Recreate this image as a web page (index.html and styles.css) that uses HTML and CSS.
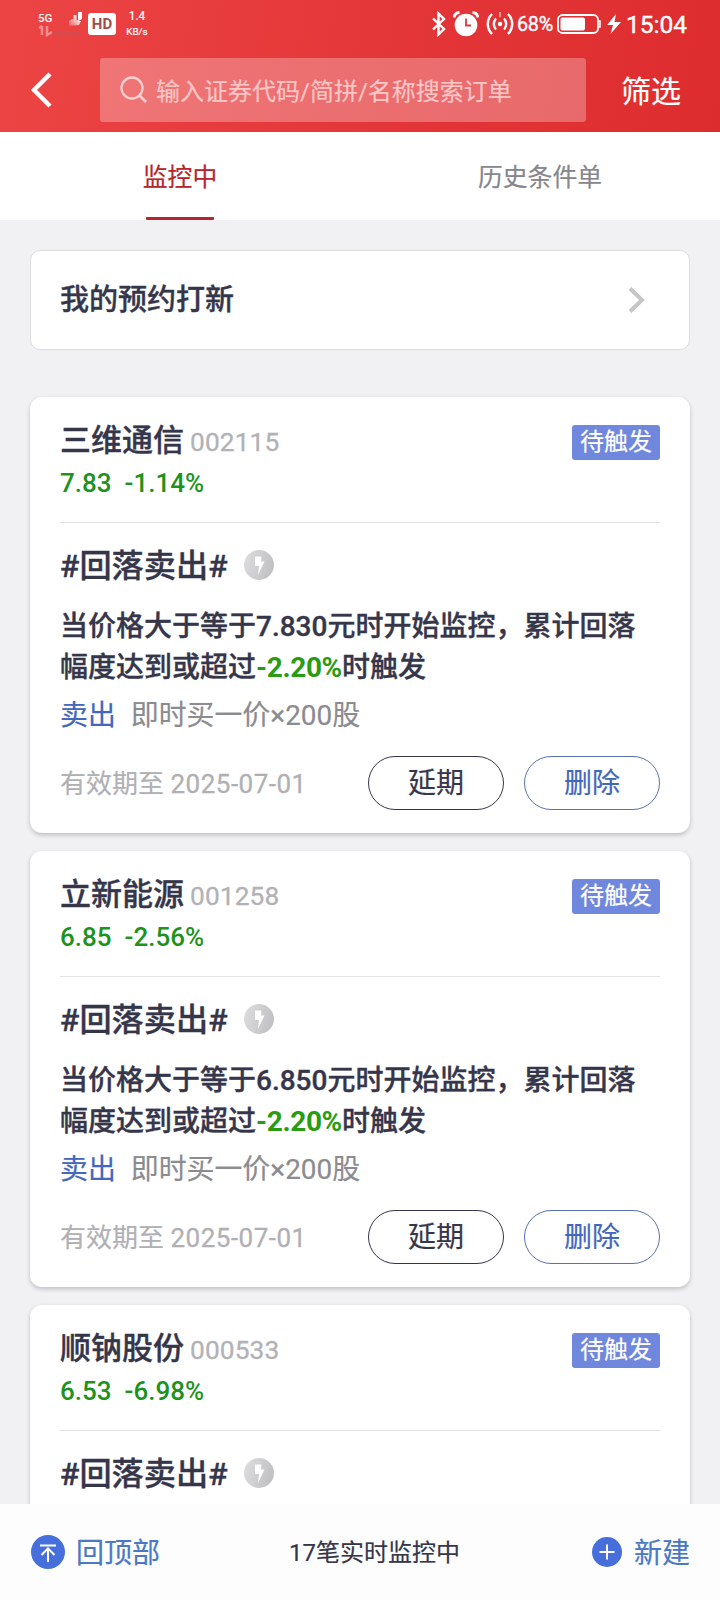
FILE: index.html
```html
<!DOCTYPE html>
<html lang="zh-CN">
<head>
<meta charset="utf-8">
<title>条件单</title>
<link rel="stylesheet" href="styles.css">
</head>
<body>
<div class="app">
  <header class="header">
    <div class="status">
      <div class="status-left">
        <div class="net">
          <span class="net-5g">5G</span>
          <svg class="signal" width="48" height="28" viewBox="0 0 48 28">
            <defs><linearGradient id="fade" x1="1" y1="0" x2="0" y2="1"><stop offset=".3" stop-color="#fff"/><stop offset="1" stop-color="#fff" stop-opacity=".1"/></linearGradient></defs>
            <path d="M44 1h-4v9l4-2zM38.500 4h-3v9l3-2zM34 8l-3 2v5l10-1 2-4z" fill="url(#fade)"/>
            <path d="M4 15v9M1 17l3-2M9 15v9l5-3" stroke="#fff" stroke-opacity=".4" stroke-width="2.500" fill="none"/>
            <path d="M16 22h25" stroke="#b65a5a" stroke-opacity=".35" stroke-width="4"/>
          </svg>
        </div>
        <span class="hd">HD</span>
        <span class="speed"><span class="speed-num">1.4</span><span class="speed-unit">KB/s</span></span>
      </div>
      <div class="status-right">
        <svg class="bt" width="16" height="26" viewBox="0 0 16 26"><path d="M2 7.500l11 10.500-5.500 5.500v-21L13 8 2 18.500" fill="none" stroke="#fff" stroke-width="2.400"/></svg>
        <svg class="alarm" width="26" height="26" viewBox="0 0 26 26"><circle cx="13" cy="14" r="11.300" fill="#fff"/><path d="M1 6.500a6 6 0 0 1 5.500-5M25 6.500a6 6 0 0 0-5.500-5" fill="none" stroke="#fff" stroke-width="2.800"/><path d="M13 7.500V14.500h5" fill="none" stroke="#d93a3b" stroke-width="1.800"/></svg>
        <svg class="hotspot" width="28" height="24" viewBox="0 0 28 24"><circle cx="14" cy="12" r="2.200" fill="#fff"/><g fill="none" stroke="#fff" stroke-width="2.400"><path d="M6 2a14 14 0 0 0 0 20M22 2a14 14 0 0 1 0 20M10 6.500a8 8 0 0 0 0 11M18 6.500a8 8 0 0 1 0 11"/></g><path d="M14 0v5" stroke="#ff9a8a" stroke-width="2"/></svg>
        <span class="pct">68%</span>
        <svg class="battery" width="44" height="20" viewBox="0 0 44 20"><rect x="1" y="1" width="40" height="18" rx="4.500" fill="none" stroke="#fff" stroke-width="1.800"/><rect x="3.500" y="3.500" width="24.500" height="13" rx="2" fill="#fff"/><path d="M42 7h1v6h-1" stroke="#fff" stroke-width="1.500" fill="none"/></svg>
        <svg class="bolt" width="14" height="20" viewBox="0 0 14 20"><path d="M9 0L0 11h6l-2.500 9L14 8H7.500z" fill="#fff"/></svg>
        <span class="clock">15:04</span>
      </div>
    </div>
    <div class="nav">
      <svg class="back" width="22" height="36" viewBox="0 0 22 36"><path d="M20 2L4 18l16 16" fill="none" stroke="#fff" stroke-width="4.400"/></svg>
      <div class="search">
        <svg width="28" height="28" viewBox="0 0 28 28"><circle cx="12" cy="12" r="10.500" fill="none" stroke="#fcd0d0" stroke-width="2.300"/><path d="M19 19l7 7" stroke="#fcd0d0" stroke-width="2.600"/></svg>
        <span>输入证券代码/简拼/名称搜索订单</span>
      </div>
      <span class="filter">筛选</span>
    </div>
  </header>

  <nav class="tabs">
    <div class="tab tab-active"><span>监控中</span></div>
    <div class="tab"><span>历史条件单</span></div>
  </nav>

  <main class="content">
    <section class="notice">
      <span>我的预约打新</span>
      <svg width="18" height="26" viewBox="0 0 18 26"><path d="M2 1.500L14 13 2 24.500" fill="none" stroke="#c6c6c8" stroke-width="4"/></svg>
    </section>

    <article class="card">
      <div class="card-head"><span class="name">三维通信</span><span class="code">002115</span><span class="badge">待触发</span></div>
      <div class="quote"><span>7.83</span><span>-1.14%</span></div>
      <div class="strategy"><span>#回落卖出#</span><svg width="30" height="30" viewBox="0 0 30 30"><circle cx="15" cy="15" r="15" fill="url(#coin)"/><path d="M11 6.500h6.500l-.5 5h3.500L14 25l1-9h-4z" fill="#fff"/><defs><linearGradient id="coin" x1="0" y1="0" x2="1" y2="0.300"><stop stop-color="#dedee0"/><stop offset="1" stop-color="#c2c2c4"/></linearGradient></defs></svg></div>
      <p class="desc">当价格大于等于7.830元时开始监控，累计回落<br>幅度达到或超过<b>-2.20%</b>时触发</p>
      <div class="order"><span class="side">卖出</span><span>即时买一价×200股</span></div>
      <div class="card-foot"><span class="expiry">有效期至 <span class="date">2025-07-01</span></span><span class="btn">延期</span><span class="btn btn-blue">删除</span></div>
    </article>

    <article class="card">
      <div class="card-head"><span class="name">立新能源</span><span class="code">001258</span><span class="badge">待触发</span></div>
      <div class="quote"><span>6.85</span><span>-2.56%</span></div>
      <div class="strategy"><span>#回落卖出#</span><svg width="30" height="30" viewBox="0 0 30 30"><circle cx="15" cy="15" r="15" fill="url(#coin)"/><path d="M11 6.500h6.500l-.5 5h3.500L14 25l1-9h-4z" fill="#fff"/></svg></div>
      <p class="desc">当价格大于等于6.850元时开始监控，累计回落<br>幅度达到或超过<b>-2.20%</b>时触发</p>
      <div class="order"><span class="side">卖出</span><span>即时买一价×200股</span></div>
      <div class="card-foot"><span class="expiry">有效期至 <span class="date">2025-07-01</span></span><span class="btn">延期</span><span class="btn btn-blue">删除</span></div>
    </article>

    <article class="card">
      <div class="card-head"><span class="name">顺钠股份</span><span class="code">000533</span><span class="badge">待触发</span></div>
      <div class="quote"><span>6.53</span><span>-6.98%</span></div>
      <div class="strategy"><span>#回落卖出#</span><svg width="30" height="30" viewBox="0 0 30 30"><circle cx="15" cy="15" r="15" fill="url(#coin)"/><path d="M11 6.500h6.500l-.5 5h3.500L14 25l1-9h-4z" fill="#fff"/></svg></div>
    </article>
  </main>

  <footer class="footer">
    <div class="foot-action">
      <svg width="34" height="34" viewBox="0 0 34 34"><circle cx="17" cy="17" r="17" fill="#466fdc"/><path d="M9 10.500h16M17 27V14M10.500 20l6.500-6.500 6.500 6.500" fill="none" stroke="#fff" stroke-width="2"/></svg>
      <span>回顶部</span>
    </div>
    <span class="foot-count">17笔实时监控中</span>
    <div class="foot-action foot-new">
      <svg width="30" height="30" viewBox="0 0 30 30"><circle cx="15" cy="15" r="15" fill="#466fdc"/><path d="M7.500 15h15M15 7.500v15" stroke="#fff" stroke-width="2"/></svg>
      <span>新建</span>
    </div>
  </footer>
</div>
</body>
</html>
```
FILE: styles.css
```css
* { box-sizing: border-box; }

body {
  margin: 0;
  background: #f1f0f3;
  color: #36364b;
  font-family: Roboto, "Noto Sans CJK SC", sans-serif;
  -webkit-text-stroke: .2px;
}

svg { display: block; flex: none; }

.app {
  width: 720px;
  height: 1600px;
  display: flex;
  flex-direction: column;
  overflow: hidden;
}

/* Header */
.header {
  flex: none;
  height: 132px;
  background: linear-gradient(100deg, #ec4444 0%, #e43739 50%, #dd2c2e 100%);
  color: #fff;
}

.status {
  height: 48px;
  padding: 0 33px 0 38px;
  display: flex;
  justify-content: space-between;
}

.status-left, .status-right { display: flex; align-items: center; }
.net { width: 50px; height: 26px; display: flex; position: relative; }
.net-5g { font-size: 11.500px; line-height: 14px; font-weight: 500; -webkit-text-stroke: 0; }
.signal { position: absolute; left: 0; top: 0; }

.hd {
  width: 28px;
  height: 22px;
  border-radius: 3px;
  background: #fff;
  color: #a84a4c;
  font-size: 15px;
  line-height: 23px;
  font-weight: 700;
  text-align: center;
  -webkit-text-stroke: 0;
}

.speed {
  width: 24px;
  margin-left: 9px;
  display: flex;
  flex-direction: column;
  align-items: center;
  line-height: 15px;
}

.speed-num { font-size: 12px; }
.speed-unit { font-size: 9.800px; }
.alarm { margin-left: 6px; }
.hotspot { margin-left: 7px; }
.pct { width: 37px; margin-left: 3px; padding-top: 2px; font-size: 19.800px; line-height: 46px; letter-spacing: -.3px; white-space: nowrap; -webkit-text-stroke: .35px; }
.battery { margin-left: 3px; }
.bolt { margin-left: 6px; }
.clock { width: 61px; margin-left: 5px; padding-top: 2px; font-size: 24.500px; line-height: 46px; -webkit-text-stroke: .4px; }

.nav {
  height: 84px;
  padding: 0 39px 0 30px;
  display: flex;
  align-items: center;
}

.search {
  width: 486px;
  height: 64px;
  margin-left: 48px;
  padding-left: 20px;
  border-radius: 3px;
  background: rgba(255, 255, 255, .28);
  display: flex;
  align-items: center;
  gap: 8px;
  color: #fcc6c6;
  font-size: 24px;
  line-height: 40px;
  white-space: nowrap;
}

.search span, .filter { padding-top: 3px; }
.filter { margin-left: auto; font-size: 30px; line-height: 40px; }

/* Tabs */
.tabs {
  flex: none;
  height: 88px;
  display: grid;
  grid-template-columns: 1fr 1fr;
  background: #fff;
}

.tab {
  height: 88px;
  display: flex;
  flex-direction: column;
  align-items: center;
  justify-content: space-between;
  color: #86868c;
  font-size: 24.800px;
  line-height: 40px;
  padding-top: 26px;
}

.tab-active { color: #b5272b; }

.tab-active::after {
  content: "";
  width: 68px;
  height: 3px;
  border-radius: 1px;
  background: #b3262f;
}

/* Content */
.content {
  flex: 1;
  min-height: 0;
  padding: 30px 30px 0;
  overflow: hidden;
}

.notice {
  height: 100px;
  margin-bottom: 47px;
  padding: 0 43px 0 29px;
  border: 1px solid #dedee2;
  border-radius: 10px;
  background: #fff;
  display: flex;
  align-items: center;
  justify-content: space-between;
  font-size: 29px;
  line-height: 40px;
  font-weight: 500;
}

.notice, .name, .strategy, .desc { -webkit-text-stroke: .35px; }

.card {
  height: 436px;
  margin-bottom: 18px;
  padding: 21px 30px 0;
  border-radius: 12px;
  background: #fff;
  box-shadow: 0 2px 4px rgba(40, 40, 60, .25);
}

.card-head { height: 44px; display: flex; align-items: center; line-height: 44px; }
.name { padding-top: 2px; font-size: 31px; font-weight: 500; }
.code { margin-left: 6px; padding-top: 4px; color: #b2b2b6; font-size: 26.300px; letter-spacing: .1px; -webkit-text-stroke: .3px; }

.badge {
  width: 88px;
  height: 35px;
  margin: 5px 0 0 auto;
  border-radius: 3px;
  background: #6f87dc;
  color: #fff;
  font-size: 24px;
  line-height: 35px;
  text-align: center;
}

.quote {
  height: 61px;
  display: flex;
  gap: 13px;
  border-bottom: 1px solid #e2e2e5;
  color: #1d921d;
  font-size: 26px;
  font-weight: 500;
  line-height: 42px;
  -webkit-text-stroke: 0;
}

.strategy {
  margin-top: 20px;
  display: flex;
  align-items: center;
  gap: 16px;
  font-size: 32.200px;
  font-weight: 500;
  line-height: 44px;
}

.strategy span { padding-top: 1px; }
.strategy svg { margin-bottom: 1px; }

.desc {
  margin: 18px 0 7px;
  font-size: 28px;
  font-weight: 500;
  line-height: 41px;
  white-space: nowrap;
}

.desc b { color: #2b9c12; font-weight: 700; letter-spacing: -.35px; -webkit-text-stroke: 0; }

.order {
  padding-top: 1px;
  display: flex;
  gap: 15px;
  color: #8b8b90;
  font-size: 27.900px;
  line-height: 40px;
}

.side { color: #4367bd; }

.card-foot { margin-top: 20px; display: flex; align-items: center; gap: 20px; }
.expiry { margin-right: auto; padding-top: 2px; color: #b0b0b4; font-size: 26px; line-height: 52px; }
.date { letter-spacing: .5px; -webkit-text-stroke: .3px; }

.btn {
  width: 136px;
  height: 54px;
  border: 1px solid #36364b;
  border-radius: 27px;
  font-size: 28px;
  line-height: 54px;
  text-align: center;
}

.btn-blue { border-color: #5a70b0; color: #4367bd; }

/* Footer */
.footer {
  flex: none;
  height: 96px;
  padding: 0 30px 0 31px;
  display: grid;
  grid-template-columns: 1fr auto 1fr;
  align-items: center;
  background: #fdfdfe;
}

.foot-action { display: flex; align-items: center; gap: 11px; color: #4a78c4; font-size: 28px; line-height: 40px; }
.foot-action span { padding-top: 3px; }
.foot-new { justify-content: flex-end; gap: 12px; }
.foot-count { margin-left: 28px; padding-top: 2px; font-size: 24px; line-height: 40px; }
```
